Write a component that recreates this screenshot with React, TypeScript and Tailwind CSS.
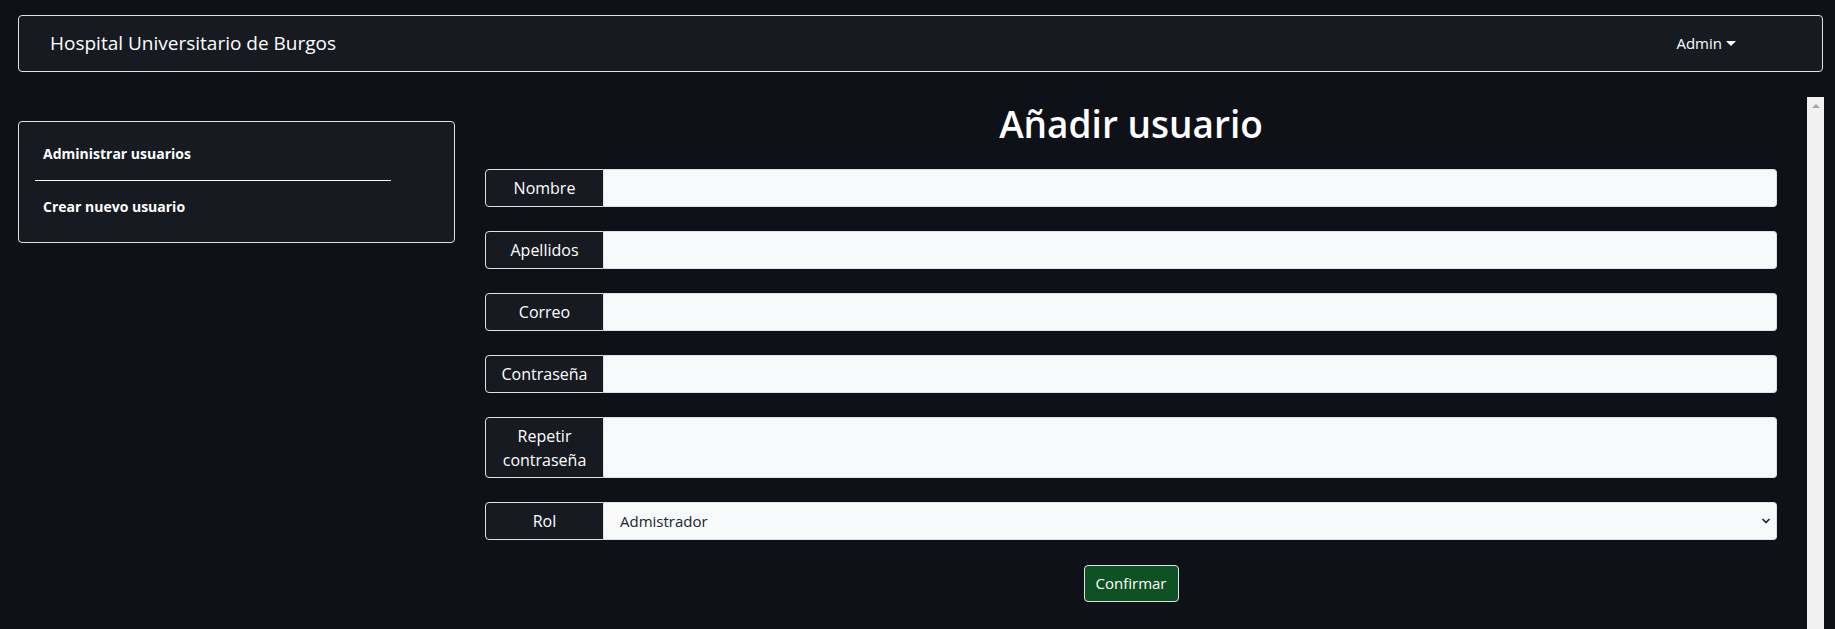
import { ChevronDown } from 'lucide-react';

const fields = ['Nombre', 'Apellidos', 'Correo', 'Contraseña'];

function Field({ label, tall }: { label: string; tall?: boolean }) {
  return (
    <div className={`flex ${tall ? 'h-[61px]' : 'h-[38px]'}`}>
      <span className="flex w-[119px] shrink-0 items-center justify-center rounded-l-[4px] border border-[#dee2e6] bg-[#171a21] px-2 text-center text-[16px] leading-[24px] text-white">
        {label}
      </span>
      <input
        type="text"
        className="flex-1 rounded-r-[4px] border border-l-0 border-[#dee2e6] bg-[#f8f9fa] px-3 text-[16px] text-[#212529] outline-none"
      />
    </div>
  );
}

export default function App() {
  return (
    <div
      className="h-screen w-full overflow-hidden bg-[#0e1117] text-white"
      style={{ fontFamily: '"Open Sans", "Noto Sans", sans-serif' }}
    >
      {/* Top bar */}
      <nav className="ml-[18px] mr-[12px] mt-[15px] flex h-[57px] items-center justify-between rounded-[4px] border border-[#dee2e6] bg-[#171a21] pl-[31px] pr-[86px]">
        <span className="text-[19px]">Hospital Universitario de Burgos</span>
        <button className="flex items-center text-[15px]">
          Admin
          <span className="ml-[4px] h-0 w-0 border-x-[5px] border-t-[5px] border-x-transparent border-t-white" />
        </button>
      </nav>

      <div className="ml-[18px] mr-[11px] mt-[25px] flex">
        {/* Sidebar */}
        <aside className="mt-[24px] h-[122px] w-[437px] shrink-0 rounded-[4px] border border-[#dee2e6] bg-[#171a21] px-[16px] pt-[20px]">
          <a className="block pl-[8px] text-[14px] font-bold leading-[24px]">Administrar usuarios</a>
          <hr className="my-[14px] w-[356px] border-white" />
          <a className="block pl-[8px] text-[14px] font-bold leading-[24px]">Crear nuevo usuario</a>
        </aside>

        {/* Main */}
        <main className="ml-[15px] flex h-[560px] flex-1">
          <div className="flex-1 pl-[15px] pr-[30px]">
            <h1 className="mt-[3px] text-center text-[37px] font-semibold leading-[48px]">Añadir usuario</h1>
            <form className="mt-[21px] flex flex-col gap-[24px]">
              {fields.map((f) => (
                <Field key={f} label={f} />
              ))}
              <Field label="Repetir contraseña" tall />
              <div className="flex h-[38px]">
                <span className="flex w-[119px] shrink-0 items-center justify-center rounded-l-[4px] border border-[#dee2e6] bg-[#171a21] text-[16px] text-white">
                  Rol
                </span>
                <div className="relative flex-1">
                  <select className="h-full w-full appearance-none rounded-r-[4px] border border-l-0 border-[#dee2e6] bg-[#f8f9fa] pl-[16px] text-[15px] text-[#212529] outline-none">
                    <option>Admistrador</option>
                  </select>
                  <ChevronDown
                    size={12}
                    strokeWidth={3.5}
                    className="pointer-events-none absolute right-[5px] top-[13px] text-[#212529]"
                  />
                </div>
              </div>
              <div className="mt-[1px] flex justify-center">
                <button
                  type="button"
                  className="h-[37px] w-[95px] rounded-[4px] border border-[#dee2e6] bg-[#0e5224] text-[15px] text-white"
                >
                  Confirmar
                </button>
              </div>
            </form>
          </div>

          {/* scrollbar track */}
          <div className="flex w-[17px] shrink-0 justify-center bg-[#f1f1f1] pt-[7px]">
            <span className="h-0 w-0 border-x-[4px] border-b-[4px] border-x-transparent border-b-[#a3a3a3]" />
          </div>
        </main>
      </div>
    </div>
  );
}
